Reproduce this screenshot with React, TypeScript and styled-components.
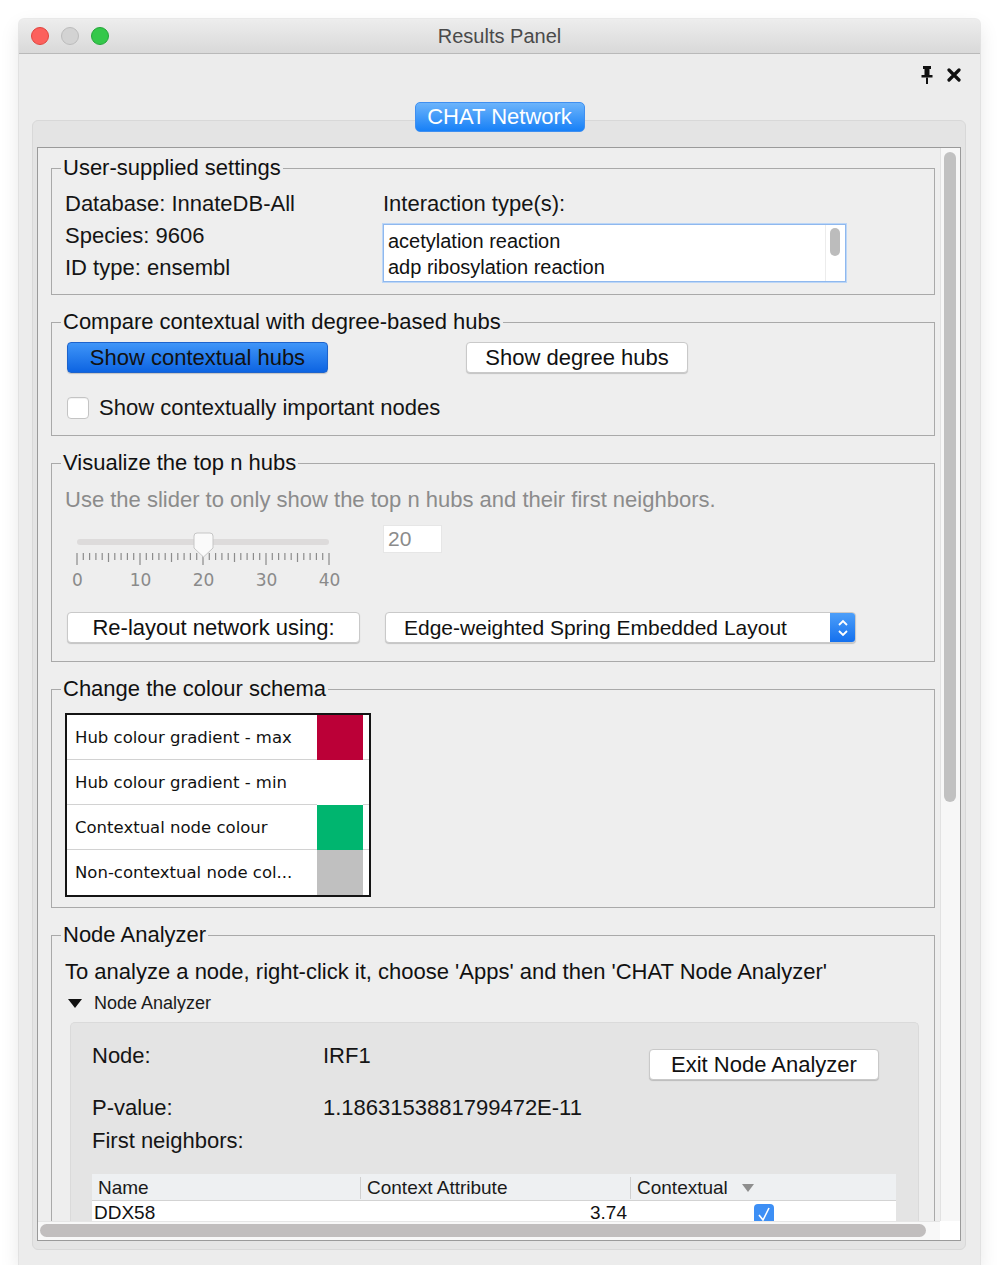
import styled, { createGlobalStyle } from 'styled-components';

const GlobalStyle = createGlobalStyle`
  html, body {
    margin: 0;
    padding: 0;
    background: #ffffff;
  }
  body {
    font-family: "Liberation Sans", Arial, sans-serif;
    color: #1b1b1b;
  }
  * {
    box-sizing: border-box;
  }
`;

const Window = styled.div`
  margin: 19px 0 0 19px;
  width: 961px;
  height: 1246px;
  display: flex;
  flex-direction: column;
  background: #ececec;
  border-radius: 5px 5px 0 0;
  box-shadow: 0 0 0 1px rgba(0, 0, 0, 0.07), 0 8px 20px rgba(0, 0, 0, 0.1);
  overflow: hidden;
`;

const TitleBar = styled.div`
  height: 35px;
  flex-shrink: 0;
  display: grid;
  grid-template-columns: 1fr auto 1fr;
  align-items: center;
  padding: 0 12px;
  background: linear-gradient(#ededed, #d9d9d9);
  border-bottom: 1px solid #b9b9b9;
`;

const Lights = styled.div`
  display: flex;
  gap: 12px;
`;

const Light = styled.span<{ $fill: string; $edge: string }>`
  width: 18px;
  height: 18px;
  border-radius: 50%;
  background: ${(p) => p.$fill};
  border: 1px solid ${(p) => p.$edge};
`;

const WindowTitle = styled.div`
  font-size: 20px;
  color: #4a4a4a;
`;

const Body = styled.div`
  flex: 1;
  display: flex;
  flex-direction: column;
  min-height: 0;
`;

const ToolRow = styled.div`
  margin-top: 10px;
  height: 22px;
  display: flex;
  justify-content: flex-end;
  align-items: center;
  gap: 14px;
  padding-right: 19px;
`;

const TabButton = styled.div`
  position: relative;
  z-index: 1;
  align-self: center;
  margin-top: 16px;
  margin-bottom: -12px;
  width: 170px;
  height: 30px;
  display: flex;
  align-items: center;
  justify-content: center;
  border-radius: 5px;
  background: linear-gradient(#6cb4fb, #1780f7);
  border: 1px solid #3f8ff0;
  color: #ffffff;
  font-size: 22px;
`;

const Pane = styled.div`
  flex: 1;
  min-height: 0;
  margin: 0 14px 15px 13px;
  padding: 26px 4px 8px 4px;
  background: #e4e4e4;
  border: 1px solid #d8d8d8;
  border-radius: 6px;
  display: flex;
`;

const Viewport = styled.div`
  flex: 1;
  display: grid;
  grid-template-columns: 1fr 20px;
  grid-template-rows: 1fr 19px;
  border: 1px solid #9a9a9a;
  background: #eeeeee;
  min-height: 0;
`;

const Content = styled.div`
  overflow: hidden;
  min-height: 0;
  padding: 8px 5px 0 13px;
  display: flex;
  flex-direction: column;
  gap: 15px;
`;

const VTrack = styled.div`
  background: #f7f7f7;
  border-left: 1px solid #e2e2e2;
  padding: 4px 4px 0 3px;
`;

const VThumb = styled.div`
  height: 650px;
  border-radius: 6px;
  background: #c1c1c1;
`;

const HTrack = styled.div`
  background: #f8f8f8;
  border-top: 1px solid #e6e6e6;
  padding: 2px 14px 0 2px;
`;

const HThumb = styled.div`
  height: 13px;
  border-radius: 7px;
  background: #c1bebe;
`;

const Corner = styled.div`
  background: #ffffff;
`;

const Group = styled.fieldset`
  margin: 0;
  padding: 0;
  min-width: 0;
  border: 1px solid #a9a9a9;
`;

const Legend = styled.legend`
  margin-left: 9px;
  padding: 0 2px;
  font-size: 22px;
  line-height: 24px;
  color: #111111;
`;

const GroupBody = styled.div<{ $pad: string }>`
  padding: ${(p) => p.$pad};
`;

const SettingsGrid = styled.div`
  display: grid;
  grid-template-columns: 318px 463px;
`;

const Column = styled.div`
  display: flex;
  flex-direction: column;
`;

const Label = styled.div<{ $line?: number }>`
  font-size: 22px;
  line-height: ${(p) => p.$line ?? 32}px;
  color: #151515;
`;

const ListBox = styled.div`
  margin-top: 4px;
  height: 58px;
  display: flex;
  background: #ffffff;
  border: 1px solid #8fb8ee;
  box-shadow: 0 0 0 1px #bcd6f6;
`;

const ListItems = styled.div`
  flex: 1;
  padding: 3px 0 0 4px;
`;

const ListItem = styled.div`
  font-size: 20px;
  line-height: 26px;
  color: #111111;
`;

const ListBar = styled.div`
  width: 20px;
  border-left: 1px solid #ececec;
  padding: 3px 5px 0 4px;
`;

const ListThumb = styled.div`
  height: 28px;
  border-radius: 5px;
  background: #bcbcbc;
`;

const ButtonRow = styled.div<{ $gap: number }>`
  display: flex;
  align-items: center;
  gap: ${(p) => p.$gap}px;
`;

const Button = styled.div<{ $width: number; $primary?: boolean }>`
  width: ${(p) => p.$width}px;
  height: 31px;
  display: flex;
  align-items: center;
  justify-content: center;
  font-size: 22px;
  color: #111111;
  border-radius: 4px;
  background: ${(p) => (p.$primary ? 'linear-gradient(#3f95f8, #0d64e2)' : '#ffffff')};
  border: 1px solid ${(p) => (p.$primary ? '#1d63cc' : '#c9c9c9')};
  box-shadow: 0 1px 1px rgba(0, 0, 0, 0.18);
`;

const CheckRow = styled.div`
  margin-top: 24px;
  display: flex;
  align-items: center;
  gap: 10px;
`;

const CheckBox = styled.span`
  width: 22px;
  height: 22px;
  border-radius: 4px;
  background: #ffffff;
  border: 1px solid #c4c4c4;
  box-shadow: inset 0 1px 1px rgba(0, 0, 0, 0.06);
`;

const Hint = styled.div`
  font-size: 22px;
  line-height: 24px;
  color: #8b8b8b;
`;

const SliderRow = styled.div`
  margin-top: 10px;
  display: grid;
  grid-template-columns: 318px auto;
  align-items: start;
`;

const SliderBox = styled.div`
  margin-left: -19px;
  margin-top: 8px;
  width: 315px;
  display: flex;
  flex-direction: column;
`;

const TickLabels = styled.div`
  display: grid;
  grid-template-columns: repeat(5, 63px);
`;

const TickLabel = styled.span`
  text-align: center;
  font-family: "DejaVu Sans", sans-serif;
  font-size: 17px;
  line-height: 20px;
  color: #8a8a8a;
`;

const NumberField = styled.div`
  margin-top: 3px;
  width: 59px;
  height: 28px;
  padding-left: 4px;
  display: flex;
  align-items: center;
  background: #ffffff;
  border: 1px solid #e6e6e6;
  font-size: 21px;
  color: #8b8b8b;
`;

const LayoutRow = styled.div`
  margin-top: 22px;
  margin-left: 2px;
  display: flex;
  align-items: center;
  gap: 25px;
`;

const Select = styled.div`
  width: 471px;
  height: 31px;
  display: flex;
  align-items: center;
  background: #ffffff;
  border: 1px solid #c9c9c9;
  border-radius: 4px;
  box-shadow: 0 1px 1px rgba(0, 0, 0, 0.18);
  overflow: hidden;
`;

const SelectText = styled.div`
  flex: 1;
  padding-left: 18px;
  font-size: 21px;
  color: #111111;
`;

const Stepper = styled.div`
  width: 25px;
  align-self: stretch;
  display: flex;
  align-items: center;
  justify-content: center;
  background: linear-gradient(#4d9ff9, #1470ee);
`;

const ColourTable = styled.div`
  width: 306px;
  border: 2px solid #141414;
  background: #ffffff;
  display: flex;
  flex-direction: column;
`;

const ColourRow = styled.div`
  display: grid;
  grid-template-columns: 1fr 46px 6px;
  height: 45px;
`;

const ColourName = styled.div<{ $last?: boolean }>`
  display: flex;
  align-items: center;
  padding-left: 8px;
  font-family: "DejaVu Sans", sans-serif;
  font-size: 16.5px;
  color: #111111;
  white-space: nowrap;
  border-bottom: ${(p) => (p.$last ? 'none' : '1px solid #d2d2d2')};
`;

const Swatch = styled.div<{ $colour: string }>`
  background: ${(p) => p.$colour};
`;

const SwatchGap = styled.div<{ $last?: boolean }>`
  border-bottom: ${(p) => (p.$last ? 'none' : '1px solid #d2d2d2')};
`;

const Paragraph = styled.div`
  font-size: 22px;
  line-height: 24px;
  color: #111111;
`;

const Disclosure = styled.div`
  margin-top: 9px;
  margin-left: 3px;
  display: flex;
  align-items: center;
  gap: 12px;
  font-size: 18px;
  line-height: 20px;
  color: #1a1a1a;
`;

const Inner = styled.div`
  margin: 9px 0 0 5px;
  padding: 21px 22px 0 21px;
  background: #e4e4e4;
  border: 1px solid #dadada;
  border-radius: 5px;
  border-bottom: none;
  height: 220px;
`;

const InfoRow = styled.div<{ $gap: number }>`
  margin-top: ${(p) => p.$gap}px;
  display: grid;
  grid-template-columns: 231px 1fr auto;
  align-items: start;
`;

const InfoText = styled.div`
  font-size: 22px;
  line-height: 24px;
  color: #151515;
`;

const ExitButton = styled(Button)`
  margin-top: 5px;
  margin-right: 17px;
`;

const DataTable = styled.div`
  margin-top: 21px;
  display: flex;
  flex-direction: column;
`;

const HeadRow = styled.div`
  height: 27px;
  display: grid;
  grid-template-columns: 268px 270px 268px;
  background: #eef0f2;
  border-bottom: 1px solid #d3d3d3;
`;

const HeadCell = styled.div<{ $divider?: boolean }>`
  display: flex;
  align-items: center;
  gap: 14px;
  padding-left: 6px;
  font-size: 19px;
  color: #1a1a1a;
  border-left: ${(p) => (p.$divider ? '1px solid #d0d0d0' : 'none')};
  margin: 3px 0;
`;

const SortArrow = styled.span`
  width: 0;
  height: 0;
  border-left: 6px solid transparent;
  border-right: 6px solid transparent;
  border-top: 8px solid #8e8e8e;
`;

const BodyRow = styled.div`
  height: 24px;
  display: grid;
  grid-template-columns: 268px 270px 268px;
  background: #ffffff;
  font-size: 19px;
  color: #111111;
`;

const Cell = styled.div<{ $align: 'left' | 'right' | 'center' }>`
  display: flex;
  align-items: flex-end;
  justify-content: ${(p) => (p.$align === 'left' ? 'flex-start' : p.$align === 'right' ? 'flex-end' : 'center')};
  padding: 0 3px 1px 2px;
`;

const BlueCheck = styled.span`
  width: 20px;
  height: 20px;
  margin-top: 3px;
  align-self: flex-start;
  border-radius: 4px;
  background: #3d8ff5;
  display: flex;
  align-items: center;
  justify-content: center;
`;

const colourRows = [
  { name: 'Hub colour gradient - max', colour: '#bb0037' },
  { name: 'Hub colour gradient - min', colour: '#ffffff' },
  { name: 'Contextual node colour', colour: '#00b56f' },
  { name: 'Non-contextual node col...', colour: '#c0c0c0' },
];

function PinIcon() {
  return (
    <svg width="12" height="18" viewBox="0 0 12 18">
      <rect x="2" y="0" width="8" height="3" fill="#111" />
      <rect x="3.5" y="3" width="5" height="6" fill="#111" />
      <rect x="0.5" y="9" width="11" height="2.5" fill="#111" />
      <rect x="5" y="11.5" width="2" height="6.5" fill="#111" />
    </svg>
  );
}

function CloseIcon() {
  return (
    <svg width="14" height="14" viewBox="0 0 14 14">
      <path d="M2 2 L12 12 M12 2 L2 12" stroke="#111" strokeWidth="3.2" strokeLinecap="round" />
    </svg>
  );
}

function SliderDrawing() {
  const start = 31;
  const step = 6.3;
  const ticks = Array.from({ length: 41 }, (_, i) => i);
  return (
    <svg width="315" height="40" viewBox="0 0 315 40">
      <rect x={start} y="9" width="252" height="6" rx="3" fill="#dddbdb" />
      {ticks.map((i) => {
        const x = start + i * step;
        const h = i % 10 === 0 ? 12 : i % 5 === 0 ? 9 : 7;
        return <rect key={i} x={x - 0.6} y="23" width="1.2" height={h} fill="#8c8c8c" />;
      })}
      <path
        d="M148 6 Q148 3 151 3 L164 3 Q167 3 167 6 L167 18 L157.5 27 L148 18 Z"
        fill="#fafafa"
        stroke="#c6c6c6"
        strokeWidth="1"
      />
    </svg>
  );
}

function StepperArrows() {
  return (
    <svg width="12" height="22" viewBox="0 0 12 22">
      <path d="M2 8 L6 4 L10 8 M2 14 L6 18 L10 14" stroke="#fff" strokeWidth="1.8" fill="none" />
    </svg>
  );
}

export default function App() {
  return (
    <>
      <GlobalStyle />
      <Window>
        <TitleBar>
          <Lights>
            <Light $fill="#fc605c" $edge="#e0443e" />
            <Light $fill="#d3d3d3" $edge="#bcbcbc" />
            <Light $fill="#34c84a" $edge="#24a63a" />
          </Lights>
          <WindowTitle>Results Panel</WindowTitle>
          <span />
        </TitleBar>
        <Body>
          <ToolRow>
            <PinIcon />
            <CloseIcon />
          </ToolRow>
          <TabButton>CHAT Network</TabButton>
          <Pane>
            <Viewport>
              <Content>
                <Group>
                  <Legend>User-supplied settings</Legend>
                  <GroupBody $pad="8px 12px 10px 13px">
                    <SettingsGrid>
                      <Column>
                        <Label>Database: InnateDB-All</Label>
                        <Label>Species: 9606</Label>
                        <Label>ID type: ensembl</Label>
                      </Column>
                      <Column>
                        <Label>Interaction type(s):</Label>
                        <ListBox>
                          <ListItems>
                            <ListItem>acetylation reaction</ListItem>
                            <ListItem>adp ribosylation reaction</ListItem>
                          </ListItems>
                          <ListBar>
                            <ListThumb />
                          </ListBar>
                        </ListBox>
                      </Column>
                    </SettingsGrid>
                  </GroupBody>
                </Group>

                <Group>
                  <Legend>Compare contextual with degree-based hubs</Legend>
                  <GroupBody $pad="8px 12px 16px 15px">
                    <ButtonRow $gap={138}>
                      <Button $width={261} $primary>
                        Show contextual hubs
                      </Button>
                      <Button $width={222}>Show degree hubs</Button>
                    </ButtonRow>
                    <CheckRow>
                      <CheckBox />
                      <Label $line={22}>Show contextually important nodes</Label>
                    </CheckRow>
                  </GroupBody>
                </Group>

                <Group>
                  <Legend>Visualize the top n hubs</Legend>
                  <GroupBody $pad="13px 12px 18px 13px">
                    <Hint>Use the slider to only show the top n hubs and their first neighbors.</Hint>
                    <SliderRow>
                      <SliderBox>
                        <SliderDrawing />
                        <TickLabels>
                          <TickLabel>0</TickLabel>
                          <TickLabel>10</TickLabel>
                          <TickLabel>20</TickLabel>
                          <TickLabel>30</TickLabel>
                          <TickLabel>40</TickLabel>
                        </TickLabels>
                      </SliderBox>
                      <NumberField>20</NumberField>
                    </SliderRow>
                    <LayoutRow>
                      <Button $width={293}>Re-layout network using:</Button>
                      <Select>
                        <SelectText>Edge-weighted Spring Embedded Layout</SelectText>
                        <Stepper>
                          <StepperArrows />
                        </Stepper>
                      </Select>
                    </LayoutRow>
                  </GroupBody>
                </Group>

                <Group>
                  <Legend>Change the colour schema</Legend>
                  <GroupBody $pad="12px 12px 10px 13px">
                    <ColourTable>
                      {colourRows.map((row, i) => {
                        const last = i === colourRows.length - 1;
                        return (
                          <ColourRow key={row.name}>
                            <ColourName $last={last}>{row.name}</ColourName>
                            <Swatch $colour={row.colour} />
                            <SwatchGap $last={last} />
                          </ColourRow>
                        );
                      })}
                    </ColourTable>
                  </GroupBody>
                </Group>

                <Group>
                  <Legend>Node Analyzer</Legend>
                  <GroupBody $pad="13px 15px 0 13px">
                    <Paragraph>
                      To analyze a node, right-click it, choose 'Apps' and then 'CHAT Node Analyzer'
                    </Paragraph>
                    <Disclosure>
                      <svg width="14" height="9" viewBox="0 0 14 9">
                        <path d="M0 0 L14 0 L7 9 Z" fill="#111" />
                      </svg>
                      Node Analyzer
                    </Disclosure>
                    <Inner>
                      <InfoRow $gap={0}>
                        <InfoText>Node:</InfoText>
                        <InfoText>IRF1</InfoText>
                        <ExitButton $width={230}>Exit Node Analyzer</ExitButton>
                      </InfoRow>
                      <InfoRow $gap={16}>
                        <InfoText>P-value:</InfoText>
                        <InfoText>1.1863153881799472E-11</InfoText>
                      </InfoRow>
                      <InfoRow $gap={9}>
                        <InfoText>First neighbors:</InfoText>
                      </InfoRow>
                      <DataTable>
                        <HeadRow>
                          <HeadCell>Name</HeadCell>
                          <HeadCell $divider>Context Attribute</HeadCell>
                          <HeadCell $divider>
                            Contextual
                            <SortArrow />
                          </HeadCell>
                        </HeadRow>
                        <BodyRow>
                          <Cell $align="left">DDX58</Cell>
                          <Cell $align="right">3.74</Cell>
                          <Cell $align="center">
                            <BlueCheck>
                              <svg width="12" height="14" viewBox="0 0 12 14">
                                <path d="M1 8 L5 13 L11 1" stroke="#fff" strokeWidth="1.6" fill="none" />
                              </svg>
                            </BlueCheck>
                          </Cell>
                        </BodyRow>
                      </DataTable>
                    </Inner>
                  </GroupBody>
                </Group>
              </Content>
              <VTrack>
                <VThumb />
              </VTrack>
              <HTrack>
                <HThumb />
              </HTrack>
              <Corner />
            </Viewport>
          </Pane>
        </Body>
      </Window>
    </>
  );
}
